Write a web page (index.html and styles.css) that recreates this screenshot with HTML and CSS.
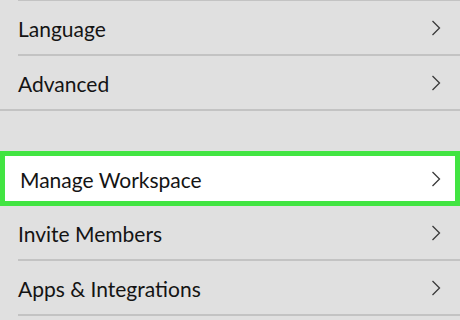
FILE: index.html
```html
<!DOCTYPE html>
<html>
<head>
    <title>Settings</title>
    <link rel="stylesheet" href="styles.css">
</head>
<body>
    <div class="settings">
        <div class="group">
            <div class="row first"><span>Language</span><svg class="chevron" viewBox="0 0 10 16"><polyline points="1.5,1 8.5,8 1.5,15"/></svg></div>
            <div class="row last"><span>Advanced</span><svg class="chevron" viewBox="0 0 10 16"><polyline points="1.5,1 8.5,8 1.5,15"/></svg></div>
        </div>

        <div class="spacer"></div>

        <div class="group">
            <div class="row selected"><span>Manage Workspace</span><svg class="chevron" viewBox="0 0 10 16"><polyline points="1.5,1 8.5,8 1.5,15"/></svg></div>
            <div class="row"><span>Invite Members</span><svg class="chevron" viewBox="0 0 10 16"><polyline points="1.5,1 8.5,8 1.5,15"/></svg></div>
            <div class="row"><span>Apps &amp; Integrations</span><svg class="chevron" viewBox="0 0 10 16"><polyline points="1.5,1 8.5,8 1.5,15"/></svg></div>
        </div>
    </div>
</body>
</html>
```

FILE: styles.css
```css
:root {
    --bg-color: #e0e0e0;
    --line-color: #c3c3c3;
    --text-color: #141414;
    --highlight: #42e442;
}

body {
    margin: 0;
    padding: 0;
    background-color: var(--bg-color);
    font-family: Lato, 'Open Sans', sans-serif;
    color: var(--text-color);
    overflow: hidden;
}

.settings {
    width: 460px;
}

.row {
    display: flex;
    align-items: center;
    justify-content: space-between;
    height: 53px;
    margin-left: 18px;
    padding-right: 19px;
    border-bottom: 2px solid var(--line-color);
    font-size: 21px;
}

.row span {
    padding-top: 2px;
}

.row.first {
    border-top: 2px solid var(--line-color);
    margin-top: -1px;
}

.row.last {
    margin-left: 0;
    padding-left: 18px;
}

.spacer {
    height: 40px;
}

.row.selected {
    margin-left: 0;
    height: 45px;
    padding-left: 15px;
    padding-right: 14px;
    background-color: #ffffff;
    border: 5px solid var(--highlight);
}

.chevron {
    width: 10px;
    height: 16px;
    fill: none;
    stroke: #3a3a3a;
    stroke-width: 1.3;
}
```
